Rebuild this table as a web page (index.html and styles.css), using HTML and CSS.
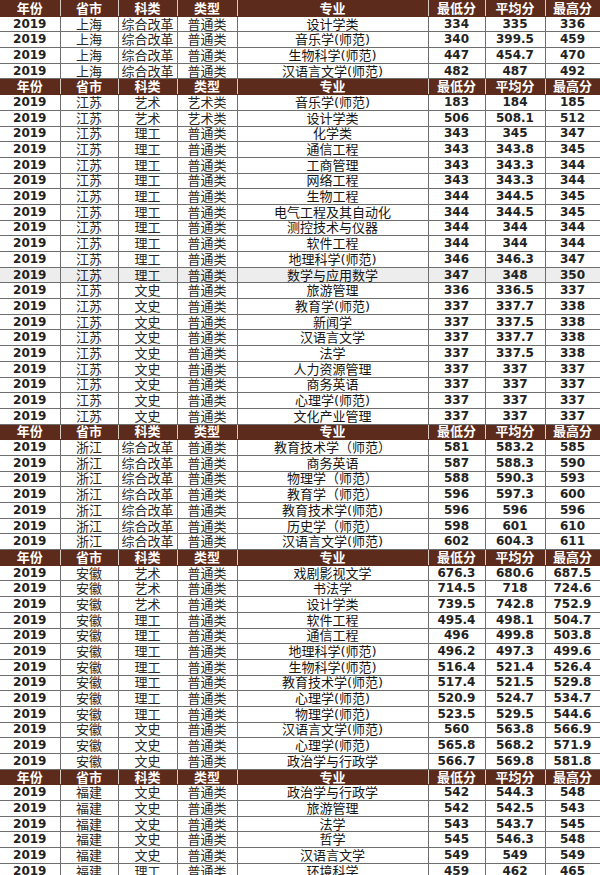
FILE: index.html
```html
<!DOCTYPE html>
<html lang="zh-CN">
<head>
<meta charset="utf-8">
<title>2019 各省录取分数</title>
<link rel="stylesheet" href="styles.css">
</head>
<body>
<table class="scores">
<colgroup>
<col class="c-year"><col class="c-prov"><col class="c-kind"><col class="c-type"><col class="c-major"><col class="c-min"><col class="c-avg"><col class="c-max">
</colgroup>
<tbody>
<tr class="hd"><td>年份</td><td>省市</td><td>科类</td><td>类型</td><td>专业</td><td>最低分</td><td>平均分</td><td>最高分</td></tr>
<tr><td class="n">2019</td><td>上海</td><td>综合改革</td><td>普通类</td><td class="m">设计学类</td><td class="n">334</td><td class="n">335</td><td class="n">336</td></tr>
<tr><td class="n">2019</td><td>上海</td><td>综合改革</td><td>普通类</td><td class="m">音乐学(师范)</td><td class="n">340</td><td class="n">399.5</td><td class="n">459</td></tr>
<tr><td class="n">2019</td><td>上海</td><td>综合改革</td><td>普通类</td><td class="m">生物科学(师范)</td><td class="n">447</td><td class="n">454.7</td><td class="n">470</td></tr>
<tr><td class="n">2019</td><td>上海</td><td>综合改革</td><td>普通类</td><td class="m">汉语言文学(师范)</td><td class="n">482</td><td class="n">487</td><td class="n">492</td></tr>
<tr class="hd"><td>年份</td><td>省市</td><td>科类</td><td>类型</td><td>专业</td><td>最低分</td><td>平均分</td><td>最高分</td></tr>
<tr><td class="n">2019</td><td>江苏</td><td>艺术</td><td>艺术类</td><td class="m">音乐学(师范)</td><td class="n">183</td><td class="n">184</td><td class="n">185</td></tr>
<tr><td class="n">2019</td><td>江苏</td><td>艺术</td><td>艺术类</td><td class="m">设计学类</td><td class="n">506</td><td class="n">508.1</td><td class="n">512</td></tr>
<tr><td class="n">2019</td><td>江苏</td><td>理工</td><td>普通类</td><td class="m">化学类</td><td class="n">343</td><td class="n">345</td><td class="n">347</td></tr>
<tr><td class="n">2019</td><td>江苏</td><td>理工</td><td>普通类</td><td class="m">通信工程</td><td class="n">343</td><td class="n">343.8</td><td class="n">345</td></tr>
<tr><td class="n">2019</td><td>江苏</td><td>理工</td><td>普通类</td><td class="m">工商管理</td><td class="n">343</td><td class="n">343.3</td><td class="n">344</td></tr>
<tr><td class="n">2019</td><td>江苏</td><td>理工</td><td>普通类</td><td class="m">网络工程</td><td class="n">343</td><td class="n">343.3</td><td class="n">344</td></tr>
<tr><td class="n">2019</td><td>江苏</td><td>理工</td><td>普通类</td><td class="m">生物工程</td><td class="n">344</td><td class="n">344.5</td><td class="n">345</td></tr>
<tr><td class="n">2019</td><td>江苏</td><td>理工</td><td>普通类</td><td class="m">电气工程及其自动化</td><td class="n">344</td><td class="n">344.5</td><td class="n">345</td></tr>
<tr><td class="n">2019</td><td>江苏</td><td>理工</td><td>普通类</td><td class="m">测控技术与仪器</td><td class="n">344</td><td class="n">344</td><td class="n">344</td></tr>
<tr><td class="n">2019</td><td>江苏</td><td>理工</td><td>普通类</td><td class="m">软件工程</td><td class="n">344</td><td class="n">344</td><td class="n">344</td></tr>
<tr><td class="n">2019</td><td>江苏</td><td>理工</td><td>普通类</td><td class="m">地理科学(师范)</td><td class="n">346</td><td class="n">346.3</td><td class="n">347</td></tr>
<tr class="hl"><td class="n">2019</td><td>江苏</td><td>理工</td><td>普通类</td><td class="m">数学与应用数学</td><td class="n">347</td><td class="n">348</td><td class="n">350</td></tr>
<tr><td class="n">2019</td><td>江苏</td><td>文史</td><td>普通类</td><td class="m">旅游管理</td><td class="n">336</td><td class="n">336.5</td><td class="n">337</td></tr>
<tr><td class="n">2019</td><td>江苏</td><td>文史</td><td>普通类</td><td class="m">教育学(师范)</td><td class="n">337</td><td class="n">337.7</td><td class="n">338</td></tr>
<tr><td class="n">2019</td><td>江苏</td><td>文史</td><td>普通类</td><td class="m">新闻学</td><td class="n">337</td><td class="n">337.5</td><td class="n">338</td></tr>
<tr><td class="n">2019</td><td>江苏</td><td>文史</td><td>普通类</td><td class="m">汉语言文学</td><td class="n">337</td><td class="n">337.7</td><td class="n">338</td></tr>
<tr><td class="n">2019</td><td>江苏</td><td>文史</td><td>普通类</td><td class="m">法学</td><td class="n">337</td><td class="n">337.5</td><td class="n">338</td></tr>
<tr><td class="n">2019</td><td>江苏</td><td>文史</td><td>普通类</td><td class="m">人力资源管理</td><td class="n">337</td><td class="n">337</td><td class="n">337</td></tr>
<tr><td class="n">2019</td><td>江苏</td><td>文史</td><td>普通类</td><td class="m">商务英语</td><td class="n">337</td><td class="n">337</td><td class="n">337</td></tr>
<tr><td class="n">2019</td><td>江苏</td><td>文史</td><td>普通类</td><td class="m">心理学(师范)</td><td class="n">337</td><td class="n">337</td><td class="n">337</td></tr>
<tr><td class="n">2019</td><td>江苏</td><td>文史</td><td>普通类</td><td class="m">文化产业管理</td><td class="n">337</td><td class="n">337</td><td class="n">337</td></tr>
<tr class="hd"><td>年份</td><td>省市</td><td>科类</td><td>类型</td><td>专业</td><td>最低分</td><td>平均分</td><td>最高分</td></tr>
<tr><td class="n">2019</td><td>浙江</td><td>综合改革</td><td>普通类</td><td class="m">教育技术学（师范）</td><td class="n">581</td><td class="n">583.2</td><td class="n">585</td></tr>
<tr><td class="n">2019</td><td>浙江</td><td>综合改革</td><td>普通类</td><td class="m">商务英语</td><td class="n">587</td><td class="n">588.3</td><td class="n">590</td></tr>
<tr><td class="n">2019</td><td>浙江</td><td>综合改革</td><td>普通类</td><td class="m">物理学（师范）</td><td class="n">588</td><td class="n">590.3</td><td class="n">593</td></tr>
<tr><td class="n">2019</td><td>浙江</td><td>综合改革</td><td>普通类</td><td class="m">教育学（师范）</td><td class="n">596</td><td class="n">597.3</td><td class="n">600</td></tr>
<tr><td class="n">2019</td><td>浙江</td><td>综合改革</td><td>普通类</td><td class="m">教育技术学(师范)</td><td class="n">596</td><td class="n">596</td><td class="n">596</td></tr>
<tr><td class="n">2019</td><td>浙江</td><td>综合改革</td><td>普通类</td><td class="m">历史学（师范）</td><td class="n">598</td><td class="n">601</td><td class="n">610</td></tr>
<tr><td class="n">2019</td><td>浙江</td><td>综合改革</td><td>普通类</td><td class="m">汉语言文学(师范)</td><td class="n">602</td><td class="n">604.3</td><td class="n">611</td></tr>
<tr class="hd"><td>年份</td><td>省市</td><td>科类</td><td>类型</td><td>专业</td><td>最低分</td><td>平均分</td><td>最高分</td></tr>
<tr><td class="n">2019</td><td>安徽</td><td>艺术</td><td>普通类</td><td class="m">戏剧影视文学</td><td class="n">676.3</td><td class="n">680.6</td><td class="n">687.5</td></tr>
<tr><td class="n">2019</td><td>安徽</td><td>艺术</td><td>普通类</td><td class="m">书法学</td><td class="n">714.5</td><td class="n">718</td><td class="n">724.6</td></tr>
<tr><td class="n">2019</td><td>安徽</td><td>艺术</td><td>普通类</td><td class="m">设计学类</td><td class="n">739.5</td><td class="n">742.8</td><td class="n">752.9</td></tr>
<tr><td class="n">2019</td><td>安徽</td><td>理工</td><td>普通类</td><td class="m">软件工程</td><td class="n">495.4</td><td class="n">498.1</td><td class="n">504.7</td></tr>
<tr><td class="n">2019</td><td>安徽</td><td>理工</td><td>普通类</td><td class="m">通信工程</td><td class="n">496</td><td class="n">499.8</td><td class="n">503.8</td></tr>
<tr><td class="n">2019</td><td>安徽</td><td>理工</td><td>普通类</td><td class="m">地理科学(师范)</td><td class="n">496.2</td><td class="n">497.3</td><td class="n">499.6</td></tr>
<tr><td class="n">2019</td><td>安徽</td><td>理工</td><td>普通类</td><td class="m">生物科学(师范)</td><td class="n">516.4</td><td class="n">521.4</td><td class="n">526.4</td></tr>
<tr><td class="n">2019</td><td>安徽</td><td>理工</td><td>普通类</td><td class="m">教育技术学(师范)</td><td class="n">517.4</td><td class="n">521.5</td><td class="n">529.8</td></tr>
<tr><td class="n">2019</td><td>安徽</td><td>理工</td><td>普通类</td><td class="m">心理学(师范)</td><td class="n">520.9</td><td class="n">524.7</td><td class="n">534.7</td></tr>
<tr><td class="n">2019</td><td>安徽</td><td>理工</td><td>普通类</td><td class="m">物理学(师范)</td><td class="n">523.5</td><td class="n">529.5</td><td class="n">544.6</td></tr>
<tr><td class="n">2019</td><td>安徽</td><td>文史</td><td>普通类</td><td class="m">汉语言文学(师范)</td><td class="n">560</td><td class="n">563.8</td><td class="n">566.9</td></tr>
<tr><td class="n">2019</td><td>安徽</td><td>文史</td><td>普通类</td><td class="m">心理学(师范)</td><td class="n">565.8</td><td class="n">568.2</td><td class="n">571.9</td></tr>
<tr><td class="n">2019</td><td>安徽</td><td>文史</td><td>普通类</td><td class="m">政治学与行政学</td><td class="n">566.7</td><td class="n">569.8</td><td class="n">581.8</td></tr>
<tr class="hd"><td>年份</td><td>省市</td><td>科类</td><td>类型</td><td>专业</td><td>最低分</td><td>平均分</td><td>最高分</td></tr>
<tr><td class="n">2019</td><td>福建</td><td>文史</td><td>普通类</td><td class="m">政治学与行政学</td><td class="n">542</td><td class="n">544.3</td><td class="n">548</td></tr>
<tr><td class="n">2019</td><td>福建</td><td>文史</td><td>普通类</td><td class="m">旅游管理</td><td class="n">542</td><td class="n">542.5</td><td class="n">543</td></tr>
<tr><td class="n">2019</td><td>福建</td><td>文史</td><td>普通类</td><td class="m">法学</td><td class="n">543</td><td class="n">543.7</td><td class="n">545</td></tr>
<tr><td class="n">2019</td><td>福建</td><td>文史</td><td>普通类</td><td class="m">哲学</td><td class="n">545</td><td class="n">546.3</td><td class="n">548</td></tr>
<tr><td class="n">2019</td><td>福建</td><td>文史</td><td>普通类</td><td class="m">汉语言文学</td><td class="n">549</td><td class="n">549</td><td class="n">549</td></tr>
<tr><td class="n">2019</td><td>福建</td><td>理工</td><td>普通类</td><td class="m">环境科学</td><td class="n">459</td><td class="n">462</td><td class="n">465</td></tr>
</tbody>
</table>
</body>
</html>
```

FILE: styles.css
```css
html, body {
  margin: 0;
  padding: 0;
  background: #ffffff;
  overflow: hidden;
}

.scores {
  width: 600px;
  table-layout: fixed;
  border-collapse: collapse;
  font-family: "DejaVu Sans", "Noto Sans CJK SC", sans-serif;
  color: #1a1a1a;
}

.c-year { width: 60px; }
.c-prov { width: 58px; }
.c-kind { width: 59px; }
.c-type { width: 60px; }
.c-major { width: 191px; }
.c-min { width: 57px; }
.c-avg { width: 60px; }
.c-max { width: 55px; }

.scores tr {
  height: 15.7px;
}

.scores td {
  padding: 0;
  border: 1px solid #6e6e6e;
  text-align: center;
  vertical-align: middle;
  font-family: "DejaVu Sans", "Noto Sans CJK SC", sans-serif;
  font-size: 13px;
  line-height: 13px;
  white-space: nowrap;
  color: #262626;
}

.scores td:first-child {
  border-left: none;
}

.scores td.n {
  font-weight: 700;
  font-size: 12px;
  color: #222222;
}

.scores td.m {
  color: #141414;
}

.scores tr.hl td {
  background: #ededed;
}

.scores tr.hd td {
  background: #5c2b1b;
  color: #ffffff;
  font-weight: 700;
  border-top-color: #5c2b1b;
  border-bottom-color: #5c2b1b;
  border-left-color: #d9cbc4;
  border-right-color: #d9cbc4;
}

.scores tr.hd td:first-child {
  border-left: none;
}
```
